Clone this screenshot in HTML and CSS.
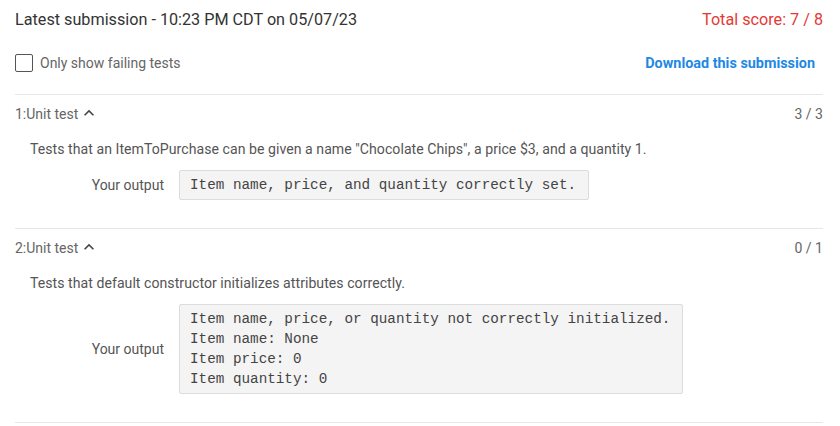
FILE: index.html
```html
<!DOCTYPE html>
<html>
<head>
<meta charset="utf-8">
<link rel="stylesheet" href="styles.css">
</head>
<body>
<div class="page">
  <div class="head-row">
    <div class="title">Latest submission - 10:23 PM CDT on 05/07/23</div>
    <div class="total">Total score: 7 / 8</div>
  </div>
  <div class="opt-row">
    <label class="check"><span class="box"></span><span class="check-label">Only show failing tests</span></label>
    <a class="download">Download this submission</a>
  </div>

  <div class="test">
    <div class="test-head">
      <div class="test-name">1:Unit test <svg class="chev" viewBox="0 0 24 24" width="20" height="20"><path d="M7.4 15.4 12 10.8l4.6 4.6L18 14l-6-6-6 6z" fill="#444"/></svg></div>
      <div class="test-score">3 / 3</div>
    </div>
    <div class="desc">Tests that an ItemToPurchase can be given a name "Chocolate Chips", a price $3, and a quantity 1.</div>
    <div class="out-row">
      <div class="out-label">Your output</div>
      <pre class="out">Item name, price, and quantity correctly set.</pre>
    </div>
  </div>

  <div class="test">
    <div class="test-head">
      <div class="test-name">2:Unit test <svg class="chev" viewBox="0 0 24 24" width="20" height="20"><path d="M7.4 15.4 12 10.8l4.6 4.6L18 14l-6-6-6 6z" fill="#444"/></svg></div>
      <div class="test-score">0 / 1</div>
    </div>
    <div class="desc">Tests that default constructor initializes attributes correctly.</div>
    <div class="out-row">
      <div class="out-label">Your output</div>
      <pre class="out">Item name, price, or quantity not correctly initialized.
Item name: None
Item price: 0
Item quantity: 0</pre>
    </div>
  </div>
  <div class="end-line"></div>
</div>
</body>
</html>
```

FILE: styles.css
```css
* { box-sizing: border-box; }
html, body { margin: 0; padding: 0; background: #fff; }
body {
  font-family: Roboto, "Liberation Sans", sans-serif;
  color: #333;
}
.page {
  width: 808px;
  margin-left: 15px;
}
.head-row {
  display: flex;
  justify-content: space-between;
  align-items: center;
  padding-top: 10px;
  height: 30px;
  font-size: 16.2px;
  line-height: 20px;
}
.title { color: #333; }
.total { color: #e53935; }
.opt-row {
  display: flex;
  justify-content: space-between;
  align-items: center;
  margin-top: 23px;
  height: 20px;
  margin-bottom: 21px;
}
.check {
  display: flex;
  align-items: center;
}
.box {
  width: 18px;
  height: 18px;
  border: 1.5px solid #555;
  border-radius: 2px;
  margin-right: 7px;
}
.check-label {
  font-size: 14px;
  color: #666;
}
.download {
  font-size: 14.4px;
  font-weight: 700;
  color: #1e88e5;
  margin-right: 8px;
}
.test {
  border-top: 1px solid #e6e6e6;
  padding-bottom: 28px;
}
.test-head {
  display: flex;
  justify-content: space-between;
  align-items: center;
  padding-top: 9px;
  height: 29px;
  font-size: 14px;
  line-height: 20px;
  color: #666;
}
.test-name {
  display: flex;
  align-items: center;
}
.chev { margin-left: 1px; margin-top: -2px; }
.desc {
  margin-top: 15px;
  padding-left: 15px;
  font-size: 14.1px;
  letter-spacing: 0.04px;
  line-height: 20px;
  color: #555;
}
.out-row {
  display: flex;
  align-items: center;
  margin-top: 11px;
}
.out-label {
  width: 164px;
  padding-right: 15px;
  text-align: right;
  font-size: 14px;
  color: #555;
}
.out {
  margin: 0;
  background: #f4f4f4;
  border: 1px solid #dcdcdc;
  border-radius: 2px;
  padding: 4px 12px 4px 10px;
  font-family: "Liberation Mono", "Courier New", monospace;
  font-size: 14.3px;
  line-height: 20px;
  color: #444;
}
.end-line {
  border-top: 1px solid #e6e6e6;
}
```
